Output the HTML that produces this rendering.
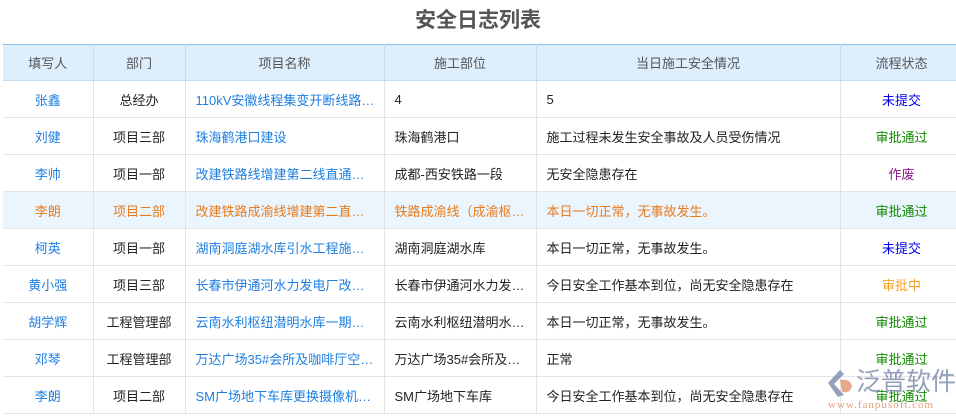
<!DOCTYPE html>
<html><head><meta charset="utf-8"><style>
body{margin:0;width:956px;height:419px;overflow:hidden;background:#fff;font-family:"Liberation Sans","Noto Sans CJK SC",sans-serif;font-size:13px;color:#222;position:relative}
h1{margin:0;height:44px;line-height:42px;text-align:center;font-size:21px;font-weight:bold;color:#555}
table{position:absolute;left:3px;top:44px;border-collapse:collapse;table-layout:fixed;width:960px}
th{background:#ddeefc;color:#555;font-weight:normal;height:35px;padding:0;border-top:1px solid #8cc2ee;border-right:1px solid #c6dcef;border-bottom:1px solid #c6dcef}
td{height:36px;border-right:1px solid #e4e4e4;border-bottom:1px solid #e4e4e4;white-space:nowrap;overflow:hidden;text-overflow:ellipsis;padding:0 9px 0 10px}
td.c{text-align:center;padding:0}
.b{color:#1e7fe0}
tr.h td{background:#ebf5fe;color:#e87b1c}
.s1{color:#0000ee}.s2{color:#118800}.s3{color:#8a1a8a}.s4{color:#f7a030}
.wm{position:absolute;left:856px;top:367px;font-size:25px;line-height:30px;color:#8090b0;opacity:.85;white-space:nowrap}
.wm2{position:absolute;left:828px;top:399px;font-size:11px;color:#e4a080;font-family:"Liberation Serif",serif;letter-spacing:1px;white-space:nowrap}
.logo{position:absolute;left:824px;top:368px}
</style></head><body>
<h1>安全日志列表</h1>
<table>
<colgroup><col style="width:90px"><col style="width:92px"><col style="width:199px"><col style="width:152px"><col style="width:304px"><col style="width:123px"></colgroup>
<tr><th>填写人</th><th>部门</th><th>项目名称</th><th>施工部位</th><th>当日施工安全情况</th><th>流程状态</th></tr>
<tr><td class="c b">张鑫</td><td class="c">总经办</td><td class="b">110kV安徽线程集变开断线路工程</td><td>4</td><td>5</td><td class="c s1">未提交</td></tr>
<tr><td class="c b">刘健</td><td class="c">项目三部</td><td class="b">珠海鹤港口建设</td><td>珠海鹤港口</td><td>施工过程未发生安全事故及人员受伤情况</td><td class="c s2">审批通过</td></tr>
<tr><td class="c b">李帅</td><td class="c">项目一部</td><td class="b">改建铁路线增建第二线直通线工程</td><td>成都-西安铁路一段</td><td>无安全隐患存在</td><td class="c s3">作废</td></tr>
<tr class="h"><td class="c">李朗</td><td class="c">项目二部</td><td>改建铁路成渝线增建第二直通线工程</td><td>铁路成渝线（成渝枢纽段）</td><td>本日一切正常，无事故发生。</td><td class="c s2" style="color:#118800">审批通过</td></tr>
<tr><td class="c b">柯英</td><td class="c">项目一部</td><td class="b">湖南洞庭湖水库引水工程施工标段</td><td>湖南洞庭湖水库</td><td>本日一切正常，无事故发生。</td><td class="c s1">未提交</td></tr>
<tr><td class="c b">黄小强</td><td class="c">项目三部</td><td class="b">长春市伊通河水力发电厂改建工程</td><td>长春市伊通河水力发电厂</td><td>今日安全工作基本到位，尚无安全隐患存在</td><td class="c s4">审批中</td></tr>
<tr><td class="c b">胡学辉</td><td class="c">工程管理部</td><td class="b">云南水利枢纽潜明水库一期工程</td><td>云南水利枢纽潜明水库工程</td><td>本日一切正常，无事故发生。</td><td class="c s2">审批通过</td></tr>
<tr><td class="c b">邓琴</td><td class="c">工程管理部</td><td class="b">万达广场35#会所及咖啡厅空调工程</td><td>万达广场35#会所及咖啡厅</td><td>正常</td><td class="c s2">审批通过</td></tr>
<tr><td class="c b">李朗</td><td class="c">项目二部</td><td class="b">SM广场地下车库更换摄像机工程</td><td>SM广场地下车库</td><td>今日安全工作基本到位，尚无安全隐患存在</td><td class="c s2">审批通过</td></tr>
</table>
<svg class="logo" width="32" height="30" viewBox="0 0 32 30"><path d="M4 15 L16 2 L20 6 L10 16 L20 27 L14 29 Z" fill="#8090b0" opacity=".85"/><path d="M16 12 Q26 10 28 18 Q26 26 18 24 Z" fill="#e4a080" opacity=".9"/></svg>
<div class="wm">泛普软件</div>
<div class="wm2">www.fanpusoft.com</div>
</body></html>
